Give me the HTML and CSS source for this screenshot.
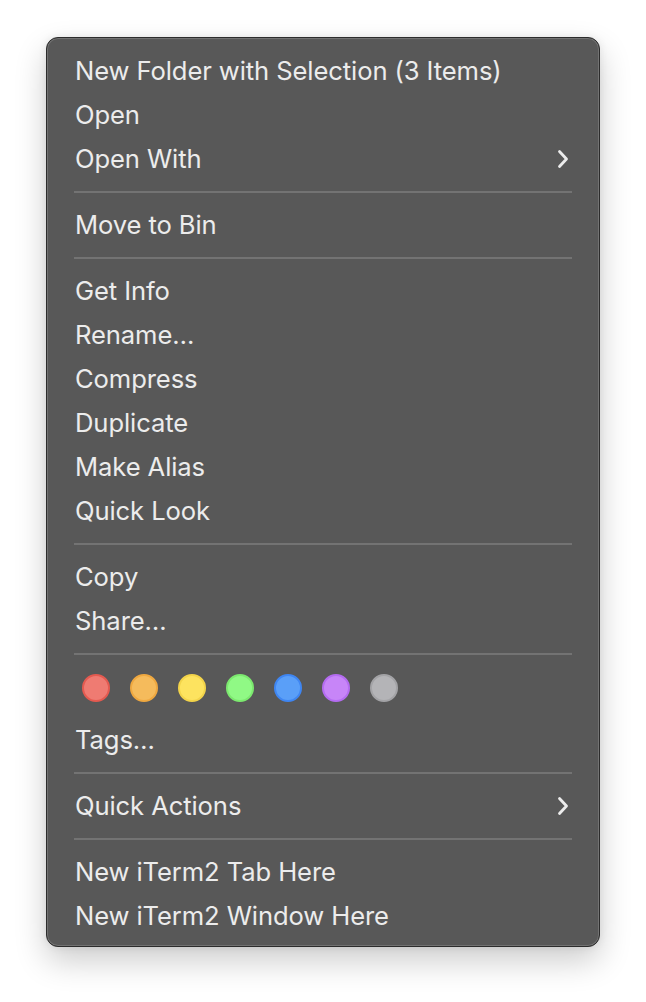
FILE: index.html
```html
<!DOCTYPE html>
<html>
<head>
<meta charset="utf-8">
<link rel="stylesheet" href="styles.css">
</head>
<body>
<div class="menu">
  <div class="item">New Folder with Selection (3 Items)</div>
  <div class="item">Open</div>
  <div class="item"><span>Open With</span><svg class="chev" viewBox="0 0 12 20" width="12" height="20"><path d="M2.5 2.5 L9.5 10 L2.5 17.5" fill="none" stroke="#ececec" stroke-width="2.8" stroke-linecap="round" stroke-linejoin="round"/></svg></div>
  <div class="sep"></div>
  <div class="item">Move to Bin</div>
  <div class="sep"></div>
  <div class="item">Get Info</div>
  <div class="item">Rename…</div>
  <div class="item">Compress</div>
  <div class="item">Duplicate</div>
  <div class="item">Make Alias</div>
  <div class="item">Quick Look</div>
  <div class="sep"></div>
  <div class="item">Copy</div>
  <div class="item">Share…</div>
  <div class="sep"></div>
  <div class="tags">
    <span class="dot red"></span>
    <span class="dot orange"></span>
    <span class="dot yellow"></span>
    <span class="dot green"></span>
    <span class="dot blue"></span>
    <span class="dot purple"></span>
    <span class="dot gray"></span>
  </div>
  <div class="item">Tags…</div>
  <div class="sep"></div>
  <div class="item"><span>Quick Actions</span><svg class="chev" viewBox="0 0 12 20" width="12" height="20"><path d="M2.5 2.5 L9.5 10 L2.5 17.5" fill="none" stroke="#ececec" stroke-width="2.8" stroke-linecap="round" stroke-linejoin="round"/></svg></div>
  <div class="sep"></div>
  <div class="item">New iTerm2 Tab Here</div>
  <div class="item">New iTerm2 Window Here</div>
</div>
</body>
</html>
```

FILE: styles.css
```css
html, body {
  margin: 0;
  padding: 0;
  background: #ffffff;
}
body {
  padding: 37px 0 60px 46px;
  font-family: Inter, "Liberation Sans", sans-serif;
}
.menu {
  box-sizing: border-box;
  width: 554px;
  padding: 11px 27px 8px 27px;
  background: #585858;
  border: 1px solid #2c2c2c;
  border-radius: 12px;
  box-shadow: inset 0 0 0 1px #727272, 0 14px 32px rgba(0, 0, 0, 0.2), 0 0 8px rgba(0, 0, 0, 0.08);
}
.item {
  height: 44px;
  display: flex;
  align-items: center;
  justify-content: space-between;
  padding: 0 3px 1px 1px;
  box-sizing: border-box;
  font-size: 25.6px;
  letter-spacing: -0.1px;
  color: #ececec;
  white-space: nowrap;
}
.chev {
  display: block;
}
.sep {
  height: 2px;
  margin: 10px 0;
  background: #737373;
}
.tags {
  height: 53px;
  box-sizing: border-box;
  padding: 9px 0 0 8px;
  display: flex;
  gap: 20px;
}
.dot {
  box-sizing: border-box;
  width: 28px;
  height: 28px;
  border-radius: 50%;
  border: 2px solid;
}
.red { background: #ef7b72; border-color: #e45a50; }
.orange { background: #f5bb5c; border-color: #efa840; }
.yellow { background: #fde35f; border-color: #f3d44a; }
.green { background: #90f985; border-color: #7ce96f; }
.blue { background: #5a9ff8; border-color: #3f86f2; }
.purple { background: #c785f8; border-color: #b46cf1; }
.gray { background: #b4b4b7; border-color: #a3a3a6; }
```
